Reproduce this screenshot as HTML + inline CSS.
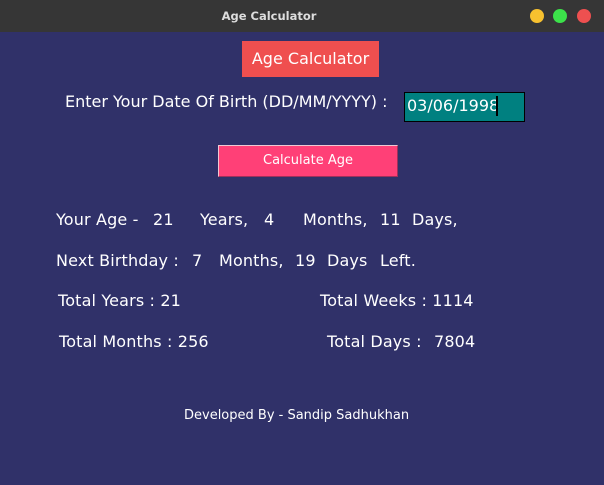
<!DOCTYPE html>
<html><head><meta charset="utf-8"><style>
*{margin:0;padding:0;box-sizing:border-box}
body{width:604px;height:485px;background:#303169;font-family:"DejaVu Sans","Liberation Sans",sans-serif;color:#fff;position:relative;overflow:hidden}
.t{position:absolute;white-space:pre;font-size:16px;line-height:18px;letter-spacing:0.15px}
#bar{position:absolute;left:0;top:0;width:604px;height:32px;background:#363636}
.dot{position:absolute;top:9px;width:14px;height:14px;border-radius:50%}
</style></head><body>
<div id="bar">
<div class="t" style="left:0;width:538px;text-align:center;top:7px;font-size:11.5px;font-weight:bold;color:#ddd;letter-spacing:0">Age Calculator</div>
<div class="dot" style="left:530px;background:#f7c12f"></div>
<div class="dot" style="left:553px;background:#3ce24a"></div>
<div class="dot" style="left:577px;background:#ee5050"></div>
</div>
<div style="position:absolute;left:242px;top:41px;width:137px;height:36px;background:#ef4f4f"></div>
<div class="t" style="left:242px;width:137px;text-align:center;top:50px;font-size:16px;letter-spacing:0">Age Calculator</div>
<div class="t" style="left:65px;top:93px;letter-spacing:0">Enter Your Date Of Birth (DD/MM/YYYY) :</div>
<div style="position:absolute;left:404px;top:92px;width:121px;height:30px;background:#008080;border:1px solid #000"></div>
<div class="t" style="left:407px;top:97px;font-size:16px;letter-spacing:0">03/06/1998</div>
<div style="position:absolute;left:496px;top:96px;width:2px;height:20px;background:#000"></div>
<div style="position:absolute;left:218px;top:145px;width:180px;height:32px;background:#ff4077;border:1px solid #f0c8d4;border-right-color:#a0305a;border-bottom-color:#a0305a"></div>
<div class="t" style="left:218px;width:180px;text-align:center;top:152px;font-size:13px;letter-spacing:0">Calculate Age</div>
<div class="t" style="left:56px;top:211px">Your Age -</div>
<div class="t" style="left:153px;top:211px">21</div>
<div class="t" style="left:200px;top:211px">Years,</div>
<div class="t" style="left:264px;top:211px">4</div>
<div class="t" style="left:303px;top:211px">Months,</div>
<div class="t" style="left:380px;top:211px">11</div>
<div class="t" style="left:412px;top:211px">Days,</div>
<div class="t" style="left:56px;top:252px">Next Birthday :</div>
<div class="t" style="left:192px;top:252px">7</div>
<div class="t" style="left:219px;top:252px">Months,</div>
<div class="t" style="left:295px;top:252px">19</div>
<div class="t" style="left:327px;top:252px">Days</div>
<div class="t" style="left:380px;top:252px">Left.</div>
<div class="t" style="left:58px;top:292px">Total Years : 21</div>
<div class="t" style="left:320px;top:292px">Total Weeks : 1114</div>
<div class="t" style="left:59px;top:333px">Total Months : 256</div>
<div class="t" style="left:327px;top:333px">Total Days :</div>
<div class="t" style="left:434px;top:333px">7804</div>
<div class="t" style="left:184px;top:407px;font-size:13px;letter-spacing:0">Developed By - Sandip Sadhukhan</div>
</body></html>
